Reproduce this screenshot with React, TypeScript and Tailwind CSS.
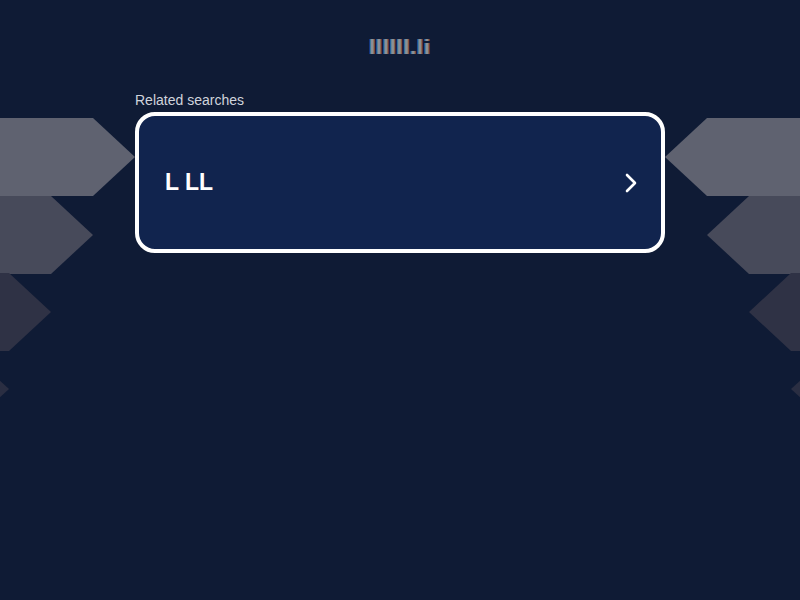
function Arrows({ side }: { side: "left" | "right" }) {
  const shapes = [
    { y: 118, base: 93, tip: 135, fill: "#5f6270" },
    { y: 196, base: 51, tip: 93, fill: "#474a5a" },
    { y: 273, base: 9, tip: 51, fill: "#2f3245" },
    { y: 350, base: -33, tip: 9, fill: "#2a2e42" },
  ];
  return (
    <svg
      width="140"
      height="600"
      viewBox="0 0 140 600"
      className={
        side === "left"
          ? "absolute left-0 top-0"
          : "absolute right-0 top-0 -scale-x-100"
      }
      aria-hidden="true"
    >
      {shapes.map((s) => (
        <polygon
          key={s.y}
          fill={s.fill}
          points={`-40,${s.y} ${s.base},${s.y} ${s.tip},${s.y + 39} ${s.base},${s.y + 78} -40,${s.y + 78}`}
        />
      ))}
    </svg>
  );
}

export default function App() {
  return (
    <div className="relative h-[600px] w-[800px] overflow-hidden bg-[#0f1b35] font-['Liberation_Sans',Arial,sans-serif]">
      <Arrows side="left" />
      <Arrows side="right" />

      <div className="relative flex flex-col items-center">
        <h1 className="mt-[34px] text-[21px] font-bold leading-[26px] tracking-[1px] text-[#8c8f98] [text-shadow:-1px_0_#3a6fa0,1px_0_#8a5a4a]">
          llllll.li
        </h1>

        <div className="mt-[32px] flex w-[530px] flex-col gap-[4px]">
          <p className="text-[14px] leading-[16px] text-[#d0d4dc]">
            Related searches
          </p>
          <a
            href="#"
            className="flex h-[141px] items-center justify-between rounded-[20px] border-4 border-white bg-[#11244e] pl-[26px] pr-[22px]"
          >
            <span className="text-[23px] font-bold text-white">L LL</span>
            <svg
              width="16"
              height="22"
              viewBox="0 0 16 22"
              fill="none"
              stroke="white"
              strokeWidth="2.6"
              strokeLinecap="round"
              strokeLinejoin="round"
            >
              <path d="M4 3l8 8-8 8" />
            </svg>
          </a>
        </div>
      </div>
    </div>
  );
}
